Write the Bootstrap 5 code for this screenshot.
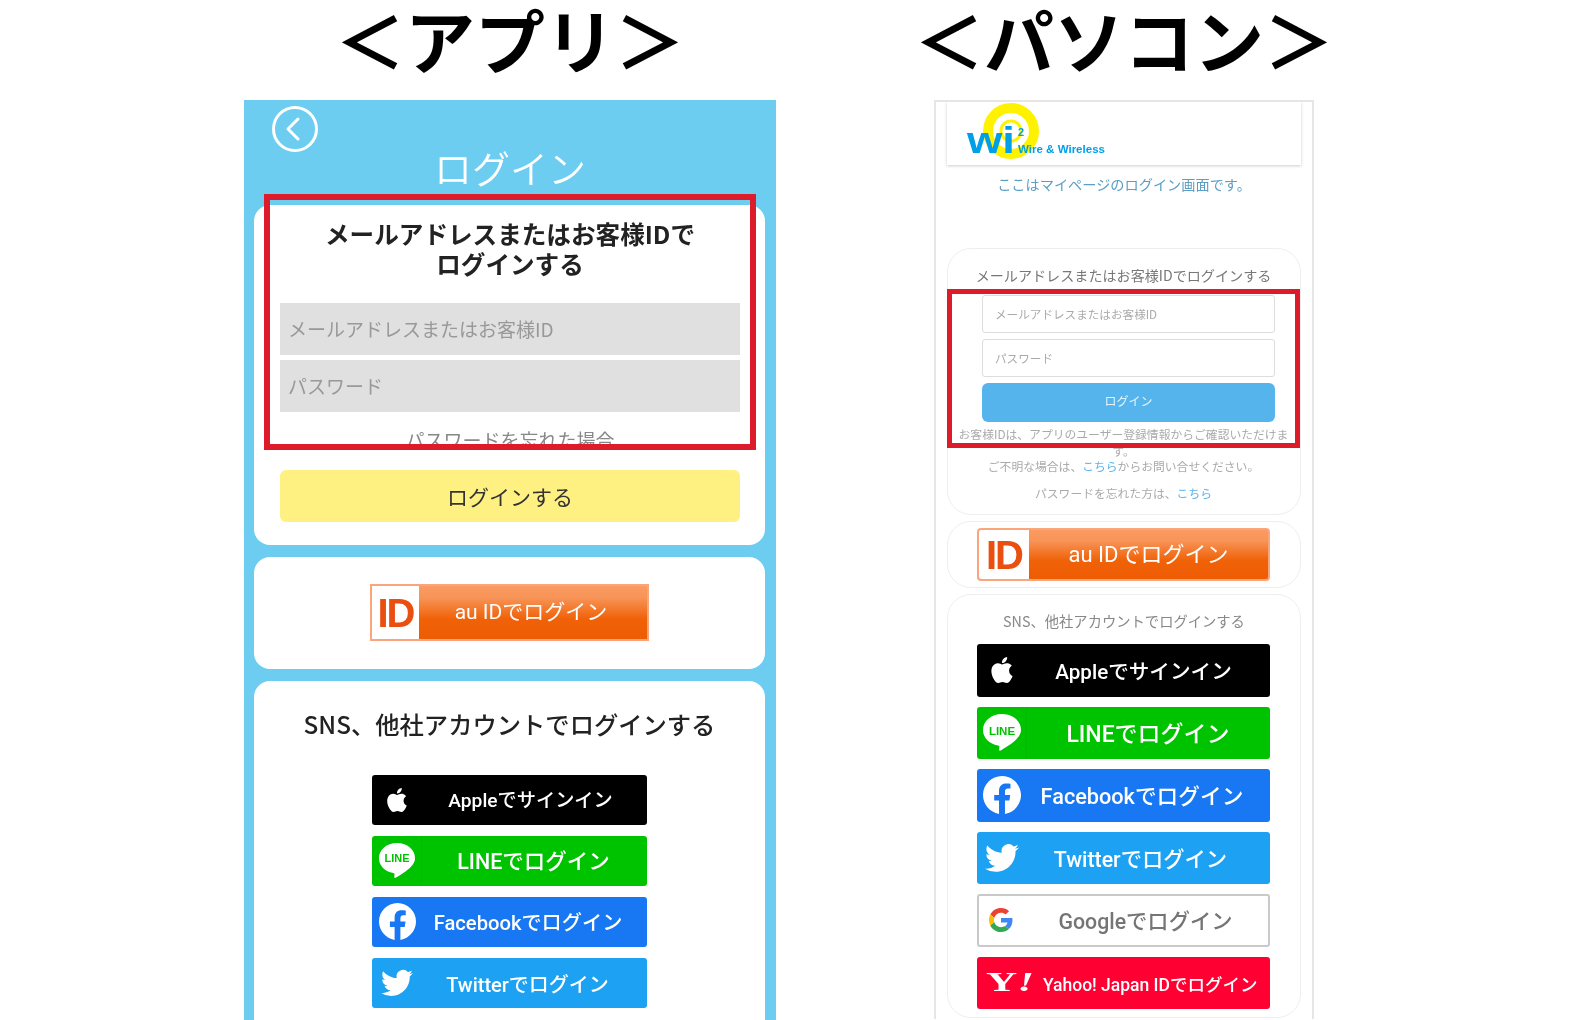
<!DOCTYPE html>
<html lang="ja">
<head>
<meta charset="utf-8">
<title>ログイン</title>
<link rel="stylesheet" href="https://cdn.jsdelivr.net/npm/bootstrap@5.3.0/dist/css/bootstrap.min.css">
<style>
html,body{height:1020px;overflow:hidden;background:#fff}
body{font-family:"Noto Sans CJK JP",sans-serif;color:#222}
.stage{width:1576px;height:1020px;padding-left:244px;gap:158px}
.app-col{width:532px;flex:none}
.pc-col{width:380px;flex:none}
.big-title{height:100px;margin:0 -40px;font-size:70px;font-weight:700;line-height:78px;color:#000;white-space:nowrap;text-align:center}
.shot{position:relative;height:920px;overflow:hidden}
.shot-blur{filter:blur(.6px);height:100%}
.red-frame{position:absolute;border-style:solid;border-color:#dc1c2b;pointer-events:none}

/* app */
.app-shot{background:#6dcdf0}
.app-shot .red-frame{left:20px;top:94px;width:492px;height:256px;border-width:6px}
.back-row{height:53px;padding:5px 0 0 27px}
.app-heading{height:52px;margin:0;color:#fff;font-size:38px;font-weight:350;line-height:26px;padding-top:1px;text-align:center}
.app-card{background:#fff;border-radius:16px;margin:0 11px 12px 10px}
.first-card{height:340px;padding:13px 25px 0 26px}
.app-lead{font-size:24.6px;line-height:30px;font-weight:700;text-align:center;margin:0 0 25px;color:#222;white-space:nowrap}
.app-input{display:block;width:100%;height:52px;border:0;border-radius:0;background:#e0e0e0;font-size:19px;padding:0 8px;margin-bottom:5px;line-height:52px;color:#999}
.app-input::placeholder{color:#999}
.app-forgot{font-size:19px;line-height:28px;color:#888;text-align:center;margin:14px 0 16px}
.yellow-btn{display:block;width:100%;height:52px;border:0;border-radius:6px;background:#fff082;color:#333;font-size:21px;line-height:50px;padding:0}
.au-card{height:111.5px;padding-top:27px}
.sns-card{height:400px;padding-top:24px}
.app-sns-title{font-size:24.3px;line-height:38px;font-weight:500;margin:0 0 32px;text-align:center;color:#222;white-space:nowrap}

.sso{display:flex;align-items:center;color:#fff;border-radius:3px;overflow:hidden;font-family:Roboto,"Noto Sans CJK JP",sans-serif;white-space:nowrap}
.sso-ic{flex:none;display:flex;align-items:center;justify-content:center;height:100%}
.sso-tx{flex:1;text-align:center;padding-top:4px}
.au-grad{background:linear-gradient(#fb9a62 0%,#f79457 22%,#f06208 62%,#ee5c04 100%);border:2px solid #fba67a}
.au-grad .sso-tx{padding-top:0}
.au-box{background:#fff;color:#ea4f10;font-family:"Liberation Sans",sans-serif;font-weight:700;letter-spacing:-2px}
.bg-apple{background:#000}.bg-line{background:#00c300}.bg-fb{background:#1877f2}.bg-tw{background:#1da1f2}
.bg-gg{background:#fff;border:2px solid #c9c9c9;color:#757575}.bg-ya{background:#ff0033}
.bg-line .sso-ic{border-right:1px solid rgba(0,0,0,.05)}

.app-au{width:279px;height:57px;margin:0 auto;border-radius:0}
.app-au .au-box{width:47px;font-size:40px}
.app-au .sso-tx{font-size:21px;padding-right:4px}
.app-sso{width:275px;margin:0 auto 11px;height:50px;font-size:20px;font-weight:500}
.app-sso .sso-ic{width:50px}
.app-sso.bg-apple{font-size:19.2px}.app-sso.bg-apple .sso-tx{padding-right:8px}
.app-sso.bg-line{font-size:21.5px}.app-sso.bg-line .sso-tx{padding-right:2px}
.app-sso.bg-fb{font-size:20.2px}.app-sso.bg-fb .sso-tx{padding-right:13px}
.app-sso.bg-tw .sso-tx{padding-right:14px}

/* pc */
.pc-shot{border:2px solid #e6e6e6;border-bottom:0;background:#fff;height:919px;padding:0 10px}
.pc-shot .red-frame{left:11px;top:187px;width:353px;height:159px;border-width:5px}
.logo-bar{height:63px;margin:0 1px;box-shadow:0 1px 3px rgba(0,0,0,.2);background:#fff;padding-left:15px}
.pc-note{font-size:14.2px;line-height:20px;color:#5c9ec4;text-align:center;margin:9px 0 54px;white-space:nowrap}
.pc-card{border:1px solid #eee;border-radius:24px;margin:0 1px 6px;background:#fff}
.pc-card1{height:267px;padding:16px 25px 0 34px}
.pc-head{font-size:14.1px;line-height:20px;color:#777;text-align:center;margin:0 0 10px -15px;width:calc(100% + 20px);white-space:nowrap}
.pc-input{display:block;width:293px;height:38px;font-size:11.6px;color:#aaa;border:1px solid #ddd;border-radius:3px;padding:0 12px;margin-bottom:6px;background:#fff}
.pc-input::placeholder{color:#aaa}
.pc-submit{display:block;width:293px;height:39px;border:0;border-radius:6px;background:#55b4ec;color:#e3f3fc;font-size:12px;padding:0 0 3px}
.pc-small{font-size:11.8px;line-height:17px;color:#aaa;text-align:center;margin:0 -25px 0 -35px;padding:0 7px}
.pc-small a{color:#59b3ec;text-decoration:none}
.gap-first{margin-top:3px}
.gap-second{margin-top:-2px}
.gap-third{margin-top:10px}
.pc-au-card{height:67px;padding:6px 0 0 29px}
.pc-au{width:293px;height:53px;border-radius:4px}
.pc-au .au-box{width:50px;font-size:40px}
.pc-au .sso-tx{font-size:22px}
.pc-card3{height:424px;padding:16px 0 0 29px;margin-bottom:0}
.pc-sns-title{font-size:14.3px;line-height:20px;color:#888;text-align:center;margin:0 0 13px -29px;white-space:nowrap}
.pc-sso{width:293px;height:52.5px;margin-bottom:10px;font-weight:500}
.pc-sso .sso-ic{width:50px}
.pc-sso.bg-apple{font-size:20.6px}.pc-sso.bg-apple .sso-tx{padding-right:10px}
.pc-sso.bg-line{font-size:23px}.pc-sso.bg-line .sso-tx{padding-right:1px}
.pc-sso.bg-fb{font-size:21.7px}.pc-sso.bg-fb .sso-tx{padding-right:13px}
.pc-sso.bg-tw{font-size:21.3px}.pc-sso.bg-tw .sso-tx{padding-right:16px}
.pc-sso.bg-gg{font-size:21.3px}.pc-sso.bg-gg .sso-ic{width:44px}
.pc-sso.bg-ya{font-size:17.5px}.pc-sso.bg-ya .sso-ic{width:66px}.pc-sso.bg-ya .sso-tx{padding-right:13px}
.ya-mark{display:inline-block;font-family:"Liberation Serif",serif;font-weight:700;font-size:27px;line-height:1;color:#fff;transform:scaleX(1.6)}
.ya-mark i{font-style:italic}
</style>
</head>
<body>
<svg width="0" height="0" class="d-block position-absolute">
  <defs>
    <symbol id="i-apple" viewBox="0 0 24 24"><path fill="#fff" d="M12.152 6.896c-.948 0-2.415-1.078-3.96-1.04-2.04.027-3.91 1.183-4.961 3.014-2.117 3.675-.546 9.103 1.519 12.09 1.013 1.454 2.208 3.09 3.792 3.039 1.52-.065 2.09-.987 3.935-.987 1.831 0 2.35.987 3.96.948 1.637-.026 2.676-1.48 3.676-2.948 1.156-1.688 1.636-3.325 1.662-3.415-.039-.013-3.182-1.221-3.22-4.857-.026-3.04 2.48-4.494 2.597-4.559-1.429-2.09-3.623-2.324-4.39-2.376-2-.156-3.675 1.09-4.61 1.09zM15.53 3.83c.843-1.012 1.4-2.427 1.245-3.83-1.207.052-2.662.805-3.532 1.818-.78.896-1.454 2.338-1.273 3.714 1.338.104 2.715-.688 3.559-1.701"/></symbol>
    <symbol id="i-fb" viewBox="0 0 24 24"><path fill="#fff" d="M24 12.073c0-6.627-5.373-12-12-12s-12 5.373-12 12c0 5.99 4.388 10.954 10.125 11.854v-8.385H7.078v-3.47h3.047V9.43c0-3.007 1.792-4.669 4.533-4.669 1.312 0 2.686.235 2.686.235v2.953H15.83c-1.491 0-1.956.925-1.956 1.874v2.25h3.328l-.532 3.47h-2.796v8.385C19.612 23.027 24 18.062 24 12.073z"/></symbol>
    <symbol id="i-tw" viewBox="0 0 24 24"><path fill="#fff" d="M23.953 4.57a10 10 0 01-2.825.775 4.958 4.958 0 002.163-2.723c-.951.555-2.005.959-3.127 1.184a4.92 4.92 0 00-8.384 4.482C7.69 8.095 4.067 6.13 1.64 3.162a4.822 4.822 0 00-.666 2.475c0 1.71.87 3.213 2.188 4.096a4.904 4.904 0 01-2.228-.616v.06a4.923 4.923 0 003.946 4.827 4.996 4.996 0 01-2.212.085 4.936 4.936 0 004.604 3.417 9.867 9.867 0 01-6.102 2.105c-.39 0-.779-.023-1.17-.067a13.995 13.995 0 007.557 2.209c9.053 0 13.998-7.496 13.998-13.985 0-.21 0-.42-.015-.63A9.935 9.935 0 0024 4.59z"/></symbol>
    <symbol id="i-line" viewBox="0 0 40 40"><path fill="#fff" d="M20 1C9 1 1 8 1 17c0 8 6.500 14 15 15.500 1 .2 1.500.6 1.400 1.500l-.3 2.500c-.1 1 .6 1.500 1.500 1 3-1.700 12-7 16-11.500C37.500 23 39 20.200 39 17 39 8 31 1 20 1z"/><text x="20" y="21.500" text-anchor="middle" font-family="Liberation Sans,sans-serif" font-weight="700" font-size="11.500" fill="#00c300">LINE</text></symbol>
    <symbol id="i-g" viewBox="0 0 48 48"><path fill="#EA4335" d="M24 9.5c3.54 0 6.71 1.22 9.21 3.6l6.85-6.85C35.9 2.38 30.47 0 24 0 14.62 0 6.51 5.38 2.56 13.22l7.98 6.19C12.43 13.72 17.74 9.5 24 9.5z"/><path fill="#4285F4" d="M46.98 24.55c0-1.57-.15-3.09-.38-4.55H24v9.02h12.94c-.58 2.96-2.26 5.48-4.78 7.18l7.73 6c4.51-4.18 7.09-10.36 7.09-17.65z"/><path fill="#FBBC05" d="M10.53 28.59c-.48-1.45-.76-2.99-.76-4.59s.27-3.14.76-4.59l-7.98-6.19C.92 16.46 0 20.12 0 24c0 3.88.92 7.54 2.56 10.78l7.97-6.19z"/><path fill="#34A853" d="M24 48c6.48 0 11.93-2.13 15.89-5.81l-7.73-6c-2.15 1.45-4.92 2.3-8.16 2.3-6.26 0-11.57-4.22-13.47-9.91l-7.98 6.19C6.51 42.62 14.62 48 24 48z"/></symbol>
  </defs>
</svg>
<div class="stage d-flex align-items-start">

  <section class="app-col">
    <h1 class="big-title">＜アプリ＞</h1>
    <div class="shot app-shot">
      <div class="shot-blur">
        <div class="back-row">
          <svg width="48" height="48" viewBox="0 0 48 48" fill="none" stroke="#fff" stroke-width="3"><circle cx="24" cy="24" r="21.500"/><path d="M27 14 17 24l10 10" stroke-linecap="round" stroke-linejoin="round"/></svg>
        </div>
        <h2 class="app-heading">ログイン</h2>
        <div class="app-card first-card">
          <p class="app-lead">メールアドレスまたはお客様IDで<br>ログインする</p>
          <input class="app-input" placeholder="メールアドレスまたはお客様ID">
          <input class="app-input" placeholder="パスワード">
          <p class="app-forgot">パスワードを忘れた場合</p>
          <button class="yellow-btn">ログインする</button>
        </div>
        <div class="app-card au-card">
          <div class="sso au-grad app-au"><span class="sso-ic au-box">ID</span><span class="sso-tx">au IDでログイン</span></div>
        </div>
        <div class="app-card sns-card">
          <p class="app-sns-title">SNS、他社アカウントでログインする</p>
          <div class="sso bg-apple app-sso"><span class="sso-ic"><svg width="24" height="26"><use href="#i-apple"/></svg></span><span class="sso-tx">Appleでサインイン</span></div>
          <div class="sso bg-line app-sso"><span class="sso-ic"><svg width="38" height="38"><use href="#i-line"/></svg></span><span class="sso-tx">LINEでログイン</span></div>
          <div class="sso bg-fb app-sso"><span class="sso-ic"><svg width="37" height="37"><use href="#i-fb"/></svg></span><span class="sso-tx">Facebookでログイン</span></div>
          <div class="sso bg-tw app-sso"><span class="sso-ic"><svg width="32" height="32"><use href="#i-tw"/></svg></span><span class="sso-tx">Twitterでログイン</span></div>
        </div>
      </div>
      <div class="red-frame"></div>
    </div>
  </section>

  <section class="pc-col">
    <h1 class="big-title">＜パソコン＞</h1>
    <div class="shot pc-shot">
      <div class="shot-blur">
        <div class="logo-bar">
          <svg width="160" height="63" viewBox="0 0 160 63">
            <circle cx="49" cy="29" r="23" fill="none" stroke="#fff200" stroke-width="10"/>
            <circle cx="49" cy="29" r="10" fill="none" stroke="#fff200" stroke-width="3"/>
            <text x="5" y="51" font-family="Liberation Sans,sans-serif" font-weight="700" font-size="36" fill="#00a0e9" textLength="48" lengthAdjust="spacingAndGlyphs">wi</text>
            <text x="56" y="34" font-family="Liberation Sans,sans-serif" font-weight="700" font-size="11" fill="#00a0e9">2</text>
            <text x="56" y="51" font-family="Liberation Sans,sans-serif" font-weight="700" font-size="11" fill="#00a0e9" textLength="87" lengthAdjust="spacingAndGlyphs">Wire &amp; Wireless</text>
          </svg>
        </div>
        <p class="pc-note">ここはマイページのログイン画面です。</p>
        <div class="pc-card pc-card1">
          <p class="pc-head">メールアドレスまたはお客様IDでログインする</p>
          <input class="pc-input" placeholder="メールアドレスまたはお客様ID">
          <input class="pc-input" placeholder="パスワード">
          <button class="pc-submit">ログイン</button>
          <p class="pc-small gap-first">お客様IDは、アプリのユーザー登録情報からご確認いただけます。</p>
          <p class="pc-small gap-second">ご不明な場合は、<a href="#">こちら</a>からお問い合せください。</p>
          <p class="pc-small gap-third">パスワードを忘れた方は、<a href="#">こちら</a></p>
        </div>
        <div class="pc-card pc-au-card">
          <div class="sso au-grad pc-au"><span class="sso-ic au-box">ID</span><span class="sso-tx">au IDでログイン</span></div>
        </div>
        <div class="pc-card pc-card3">
          <p class="pc-sns-title">SNS、他社アカウントでログインする</p>
          <div class="sso bg-apple pc-sso"><span class="sso-ic"><svg width="26" height="28"><use href="#i-apple"/></svg></span><span class="sso-tx">Appleでサインイン</span></div>
          <div class="sso bg-line pc-sso"><span class="sso-ic"><svg width="40" height="40"><use href="#i-line"/></svg></span><span class="sso-tx">LINEでログイン</span></div>
          <div class="sso bg-fb pc-sso"><span class="sso-ic"><svg width="38" height="38"><use href="#i-fb"/></svg></span><span class="sso-tx">Facebookでログイン</span></div>
          <div class="sso bg-tw pc-sso"><span class="sso-ic"><svg width="34" height="34"><use href="#i-tw"/></svg></span><span class="sso-tx">Twitterでログイン</span></div>
          <div class="sso bg-gg pc-sso"><span class="sso-ic"><svg width="24" height="24"><use href="#i-g"/></svg></span><span class="sso-tx">Googleでログイン</span></div>
          <div class="sso bg-ya pc-sso"><span class="sso-ic"><span class="ya-mark">Y<i>!</i></span></span><span class="sso-tx">Yahoo! Japan IDでログイン</span></div>
        </div>
      </div>
      <div class="red-frame"></div>
    </div>
  </section>
</div>
</body>
</html>
